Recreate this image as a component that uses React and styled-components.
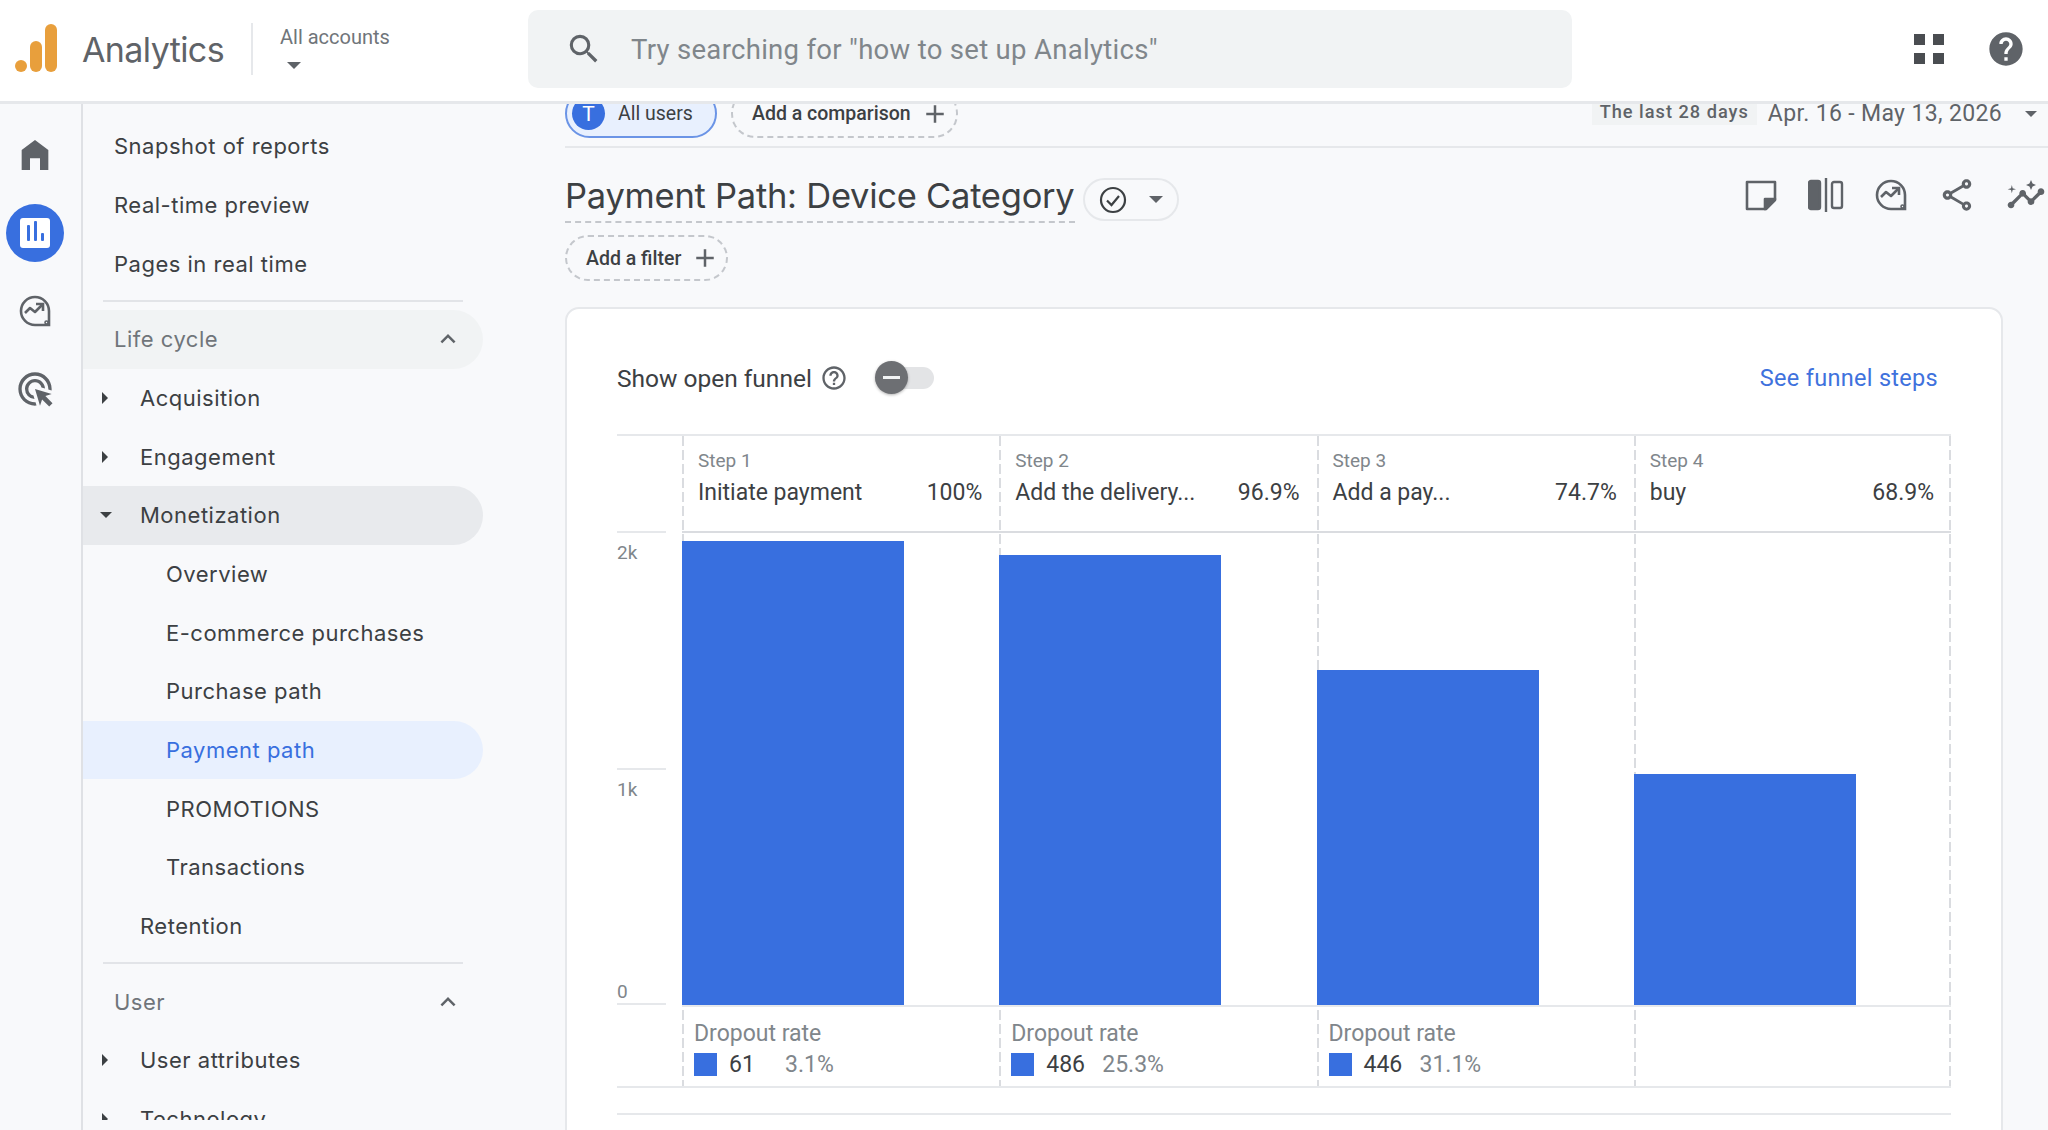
import React from 'react';
import styled, { createGlobalStyle } from 'styled-components';
import { MdSearch, MdHelp, MdAdd, MdExpandLess, MdHelpOutline, MdAdsClick, MdOutlineShare, MdInsights } from 'react-icons/md';

const GlobalStyle = createGlobalStyle`
  html, body {
    margin: 0;
    padding: 0;
    background: #f8f9fb;
  }
  * { box-sizing: border-box; }
`;

const SANS = `"Inter", "Roboto", sans-serif`;
const ROBOTO = `"Roboto", "Liberation Sans", sans-serif`;
const BLUE = '#386fdf';
const DASHES = 'repeating-linear-gradient(to bottom, #dadce0 0 10px, transparent 10px 14px)';

const Page = styled.div`
  width: 2048px;
  height: 1130px;
  overflow: hidden;
  display: flex;
  flex-direction: column;
  background: #f8f9fb;
  font-family: ${ROBOTO};
  color: #3c4043;
`;

const Header = styled.header`
  position: relative;
  z-index: 2;
  flex: none;
  height: 104px;
  padding-bottom: 3px;
  display: flex;
  align-items: center;
  background: #fff;
  border-bottom: 3px solid #e6e8eb;
`;

const LogoMark = styled.svg`
  flex: none;
  width: 42px;
  height: 48px;
  margin-left: 15px;
  margin-top: -2px;
`;

const Brand = styled.span`
  margin-left: 25px;
  width: 143px;
  font-family: ${SANS};
  font-size: 34px;
  letter-spacing: -0.6px;
  color: #5f6368;
`;

const HeaderRule = styled.span`
  width: 2px;
  height: 52px;
  margin-left: 26px;
  background: #e6e8eb;
`;

const AccountPicker = styled.div`
  width: 248px;
  margin-left: 27px;
  margin-top: -4px;
  display: flex;
  flex-direction: column;
  align-items: flex-start;
  gap: 13px;
  font-size: 20px;
  color: #70757a;
`;

const SearchBox = styled.div`
  width: 1044px;
  height: 78px;
  padding-left: 41px;
  display: flex;
  align-items: center;
  gap: 32px;
  background: #f1f3f4;
  border-radius: 10px;
  font-size: 27.5px;
  letter-spacing: 0.3px;
  color: #80868b;
  svg { flex: none; color: #5f6368; margin: 0 -4px; }
`;

const HeaderIcons = styled.div`
  margin-left: auto;
  padding-right: 22px;
  display: flex;
  align-items: center;
  gap: 42px;
  color: #5f6368;
`;

const Caret = styled.span`
  display: block;
  flex: none;
  width: 0;
  height: 0;
  margin-left: ${p => p.$ml || 0}px;
  border-left: 7px solid transparent;
  border-right: 7px solid transparent;
  border-top: 7px solid #5f6368;
`;

const SquareGrid = styled.div`
  width: 30px;
  height: 30px;
  display: grid;
  grid-template-columns: 11px 11px;
  grid-auto-rows: 11px;
  gap: 8px;
  span { background: #4a4d51; }
`;

const Body = styled.div`
  flex: 1;
  min-height: 0;
  display: flex;
`;

const Rail = styled.nav`
  flex: none;
  width: 83px;
  padding-top: 12px;
  border-right: 2px solid #dfe1e5;
  display: flex;
  flex-direction: column;
  align-items: center;
  color: #5f6368;
`;

const RailSlot = styled.div`
  width: 58px;
  height: 78px;
  margin-right: 11px;
  display: flex;
  align-items: center;
  justify-content: center;
`;

const RailActive = styled.div`
  width: 58px;
  height: 58px;
  border-radius: 50%;
  background: ${BLUE};
  display: flex;
  align-items: center;
  justify-content: center;
`;

const ReportTile = styled.div`
  width: 30px;
  height: 30px;
  padding: 7px 5px;
  display: flex;
  align-items: flex-end;
  justify-content: center;
  gap: 4px;
  border-radius: 3px;
  background: #fff;
`;

const ReportBar = styled.span`
  width: 3px;
  height: ${p => p.$h}px;
  background: ${BLUE};
  border-radius: 1px;
`;

const SideNav = styled.aside`
  flex: none;
  width: 400px;
  height: 1016px;
  overflow: hidden;
  padding-top: 13px;
  font-family: ${SANS};
  font-size: 22px;
  letter-spacing: 0.5px;
  color: #3c4043;
`;

const NavRow = styled.div`
  height: 58.67px;
  padding-left: ${p => p.$indent}px;
  padding-right: 20px;
  display: flex;
  align-items: center;
  border-radius: 0 30px 30px 0;
  background: ${p => p.$bg || 'transparent'};
  color: ${p => p.$color || 'inherit'};
`;

const NavRule = styled.div`
  height: 2px;
  margin: 7px 20px 8px 20px;
  background: #e2e4e8;
`;

const Twisty = styled.span`
  flex: none;
  width: 42px;
  margin-left: -42px;
  padding-left: ${p => (p.$open ? 2 : 4)}px;
  &::before {
    content: '';
    display: block;
    width: 0;
    height: 0;
    ${p =>
      p.$open
        ? `border-left: 6px solid transparent; border-right: 6px solid transparent; border-top: 6px solid #3c4043;`
        : `border-top: 6px solid transparent; border-bottom: 6px solid transparent; border-left: 6px solid #3c4043;`}
  }
`;

const GroupChevron = styled(MdExpandLess)`
  margin-left: auto;
  color: #5f6368;
`;

const Main = styled.main`
  flex: 1;
  min-width: 0;
  padding-left: 82px;
`;

const CompareBar = styled.div`
  height: 59px;
  margin-top: -15px;
  display: flex;
  align-items: flex-start;
  border-bottom: 2px solid #e6e8eb;
`;

const UserPill = styled.div`
  width: 152px;
  height: 49px;
  padding-left: 5px;
  display: flex;
  align-items: center;
  gap: 13px;
  border: 2.5px solid #6b94e6;
  border-radius: 25px;
  background: #e8f0fe;
  font-size: 19.5px;
  color: #3c4043;
`;

const UserBadge = styled.span`
  width: 33px;
  height: 33px;
  display: flex;
  align-items: center;
  justify-content: center;
  border-radius: 50%;
  background: ${BLUE};
  font-size: 21px;
  color: #fff;
`;

const AddChip = styled.div`
  width: ${p => p.$w}px;
  height: ${p => p.$h}px;
  margin-left: ${p => p.$ml || 0}px;
  padding-left: 19px;
  display: flex;
  align-items: center;
  gap: 9px;
  border: 2px dashed #c4c7cc;
  border-radius: 24px;
  font-size: 19.5px;
  font-weight: 500;
  color: #3c4043;
  svg { flex: none; color: #5f6368; }
`;

const DateGroup = styled.div`
  margin-left: auto;
  padding-right: 11px;
  padding-top: 11px;
  display: flex;
  align-items: center;
  font-size: 23px;
  letter-spacing: 0.35px;
  color: #5f6368;
`;

const PeriodChip = styled.span`
  width: 165px;
  height: 23px;
  margin-right: 11px;
  padding-bottom: 4px;
  display: flex;
  align-items: center;
  justify-content: center;
  background: #f1f3f4;
  font-size: 18.2px;
  font-weight: 500;
  letter-spacing: 1px;
  color: #5f6368;
`;

const DateCaret = styled(Caret)`
  margin-left: 23px;
  border-left-width: 6px;
  border-right-width: 6px;
  border-top-width: 6px;
`;

const TitleRow = styled.div`
  height: 87px;
  padding-top: 24px;
  display: flex;
  align-items: flex-start;
`;

const Title = styled.h1`
  margin: 0;
  height: 51px;
  font-family: ${SANS};
  font-size: 34.5px;
  font-weight: 400;
  line-height: 48px;
  letter-spacing: -0.25px;
  color: #3c4043;
  border-bottom: 2px dashed #c4c7cc;
`;

const StatusPill = styled.div`
  width: 96px;
  height: 43px;
  margin-left: 8px;
  margin-top: 6px;
  padding-left: 14px;
  display: flex;
  align-items: center;
  gap: 22px;
  border: 2px solid #e6e8eb;
  border-radius: 22px;
`;

const ToolIcons = styled.div`
  margin-left: auto;
  padding-right: 2px;
  padding-top: 3px;
  display: flex;
  align-items: center;
  gap: 30px;
  color: #5f6368;
`;

const Card = styled.section`
  width: 1438px;
  height: 900px;
  margin-top: 26px;
  padding: 52px 50px 0 50px;
  background: #fff;
  border: 2px solid #e6e8eb;
  border-radius: 14px;
`;

const CardTop = styled.div`
  height: 34px;
  display: flex;
  align-items: center;
  font-size: 24.5px;
  color: #3c4043;
`;

const HelpMark = styled(MdHelpOutline)`
  margin-left: 8px;
  color: #5f6368;
`;

const Toggle = styled.div`
  position: relative;
  width: 59px;
  height: 22px;
  margin-left: 27px;
  border-radius: 11px;
  background: #e3e4e6;
`;

const ToggleThumb = styled.span`
  position: absolute;
  left: 0;
  top: -6px;
  width: 33px;
  height: 33px;
  display: flex;
  align-items: center;
  justify-content: center;
  border-radius: 50%;
  background: #6d6f73;
  box-shadow: 0 1px 3px rgba(0, 0, 0, 0.3);
  &::before {
    content: '';
    width: 17px;
    height: 3px;
    background: #f1f3f4;
  }
`;

const FunnelLink = styled.a`
  margin-left: auto;
  margin-right: 13px;
  color: #3f72dd;
  font-size: 23.5px;
  letter-spacing: 0.3px;
`;

const Funnel = styled.div`
  width: 1334px;
  height: 654px;
  margin-top: 39px;
  display: grid;
  grid-template-columns: 65px repeat(4, 1fr);
  border-top: 2px solid #e6e8eb;
  border-bottom: 2px solid #e6e8eb;
`;

const Axis = styled.div`
  padding-top: 95px;
  color: #80868b;
  font-size: 19px;
`;

const AxisBand = styled.div`
  width: 49px;
  height: 237px;
  padding-top: 8px;
  display: flex;
  flex-direction: column;
  justify-content: space-between;
  border-top: 2px solid #e6e8eb;
  border-bottom: ${p => (p.$last ? '2px solid #e6e8eb' : 'none')};
`;

const StepColumn = styled.div`
  display: flex;
  flex-direction: column;
  background-image: ${DASHES}${p => (p.$last ? `, ${DASHES}` : '')};
  background-repeat: no-repeat;
  background-size: 2px 100%;
  background-position: left top${p => (p.$last ? ', right top' : '')};
`;

const StepHead = styled.div`
  flex: none;
  height: 97px;
  padding: 13px 17px 0 16px;
  border-bottom: 2px solid #dadce0;
`;

const StepLabel = styled.div`
  height: 24px;
  font-size: 19px;
  line-height: 24px;
  color: #80868b;
`;

const StepName = styled.div`
  margin-top: 6px;
  display: flex;
  justify-content: space-between;
  font-size: 23px;
  line-height: 28px;
  color: #3c4043;
`;

const Plot = styled.div`
  flex: none;
  height: 474px;
  display: flex;
  align-items: flex-end;
  border-bottom: 2px solid #e6e8eb;
`;

const Bar = styled.div`
  width: 222px;
  height: ${p => p.$h}px;
  background: ${BLUE};
`;

const Dropout = styled.div`
  padding: 13px 0 0 12px;
  font-size: 23px;
  color: #80868b;
`;

const DropoutRow = styled.div`
  margin-top: 4px;
  display: flex;
  align-items: center;
  font-size: 23px;
`;

const Swatch = styled.span`
  width: 23px;
  height: 23px;
  margin-right: 12px;
  background: ${BLUE};
`;

const DropoutCount = styled.span`
  width: 56px;
  color: #3c4043;
`;

const CardRule = styled.div`
  width: 1334px;
  height: 2px;
  margin-top: 25px;
  background: #e6e8eb;
`;

const steps = [
  { label: 'Step 1', name: 'Initiate payment', pct: '100%', bar: 464, count: '61', rate: '3.1%' },
  { label: 'Step 2', name: 'Add the delivery...', pct: '96.9%', bar: 450, count: '486', rate: '25.3%' },
  { label: 'Step 3', name: 'Add a pay...', pct: '74.7%', bar: 335, count: '446', rate: '31.1%' },
  { label: 'Step 4', name: 'buy', pct: '68.9%', bar: 231 },
];

const navTop = ['Snapshot of reports', 'Real-time preview', 'Pages in real time'];
const monetization = ['Overview', 'E-commerce purchases', 'Purchase path'];

function ExploreIcon({ size = 34 }) {
  return (
    <svg width={size} height={size} viewBox="0 0 34 34" fill="none" stroke="currentColor" strokeWidth="2.6">
      <path d="M31 17A14 14 0 1 0 17 31h14z" />
      <path d="M7 19l5-5 5 4 7-7" strokeLinejoin="round" />
      <path d="M18 10h7v7" />
      <circle cx="28.5" cy="28.5" r="1.5" fill="#f8f9fb" strokeWidth="1.6" />
    </svg>
  );
}

function App() {
  return (
    <Page>
      <GlobalStyle />
      <Header>
        <LogoMark viewBox="0 0 42 48">
          <rect x="0" y="36" width="12" height="12" rx="6" fill="#e89f3c" />
          <rect x="15" y="17" width="12" height="31" rx="6" fill="#e89f3c" />
          <rect x="30" y="0" width="12" height="48" rx="6" fill="#e89f3c" />
        </LogoMark>
        <Brand>Analytics</Brand>
        <HeaderRule />
        <AccountPicker>
          All accounts
          <Caret $ml={7} />
        </AccountPicker>
        <SearchBox>
          <MdSearch size={38} />
          Try searching for "how to set up Analytics"
        </SearchBox>
        <HeaderIcons>
          <SquareGrid>
            <span /><span /><span /><span />
          </SquareGrid>
          <MdHelp size={40} />
        </HeaderIcons>
      </Header>
      <Body>
        <Rail>
          <RailSlot>
            <svg width="40" height="40" viewBox="0 0 24 24" fill="currentColor">
              <path d="M12 3L4 9v12h5v-7h6v7h5V9z" />
            </svg>
          </RailSlot>
          <RailSlot>
            <RailActive>
              <ReportTile>
                <ReportBar $h={16} />
                <ReportBar $h={20} />
                <ReportBar $h={8} />
              </ReportTile>
            </RailActive>
          </RailSlot>
          <RailSlot><ExploreIcon /></RailSlot>
          <RailSlot><MdAdsClick size={40} /></RailSlot>
        </Rail>
        <SideNav>
          {navTop.map(t => (
            <NavRow key={t} $indent={31}>{t}</NavRow>
          ))}
          <NavRule />
          <NavRow $indent={31} $bg="#f1f3f4" $color="#70757a">
            Life cycle
            <GroupChevron size={30} />
          </NavRow>
          <NavRow $indent={57}><Twisty />Acquisition</NavRow>
          <NavRow $indent={57}><Twisty />Engagement</NavRow>
          <NavRow $indent={57} $bg="#e8eaed"><Twisty $open />Monetization</NavRow>
          {monetization.map(t => (
            <NavRow key={t} $indent={83}>{t}</NavRow>
          ))}
          <NavRow $indent={83} $bg="#e8f0fe" $color={BLUE}>Payment path</NavRow>
          <NavRow $indent={83}>PROMOTIONS</NavRow>
          <NavRow $indent={83}>Transactions</NavRow>
          <NavRow $indent={57}>Retention</NavRow>
          <NavRule />
          <NavRow $indent={31} $color="#70757a">
            User
            <GroupChevron size={30} />
          </NavRow>
          <NavRow $indent={57}><Twisty />User attributes</NavRow>
          <NavRow $indent={57}><Twisty />Technology</NavRow>
        </SideNav>
        <Main>
          <CompareBar>
            <UserPill>
              <UserBadge>T</UserBadge>
              All users
            </UserPill>
            <AddChip $w={227} $h={49} $ml={14}>
              Add a comparison
              <MdAdd size={30} />
            </AddChip>
            <DateGroup>
              <PeriodChip>The last 28 days</PeriodChip>
              Apr. 16 - May 13, 2026
              <DateCaret />
            </DateGroup>
          </CompareBar>
          <TitleRow>
            <Title>Payment Path: Device Category</Title>
            <StatusPill>
              <svg width="28" height="28" viewBox="0 0 28 28" fill="none" stroke="#3c4043" strokeWidth="2.2">
                <circle cx="14" cy="14" r="12" />
                <path d="M8 14.5l4.5 4.5L20 10" />
              </svg>
              <Caret />
            </StatusPill>
            <ToolIcons>
              <svg width="34" height="34" viewBox="0 0 34 34" fill="none" stroke="currentColor" strokeWidth="2.6">
                <path d="M3 4h28v18l-9 9H3z" strokeLinejoin="round" />
                <path d="M31 21l-10 10V21z" fill="currentColor" strokeLinejoin="round" />
              </svg>
              <svg width="36" height="36" viewBox="0 0 36 36" fill="none" stroke="currentColor" strokeWidth="2.4">
                <rect x="1" y="4" width="11" height="28" rx="2" fill="currentColor" />
                <path d="M18 1v34" />
                <rect x="24" y="5" width="10" height="26" rx="2" />
              </svg>
              <ExploreIcon />
              <MdOutlineShare size={38} />
              <MdInsights size={40} />
            </ToolIcons>
          </TitleRow>
          <AddChip $w={163} $h={46}>
            Add a filter
            <MdAdd size={30} />
          </AddChip>
          <Card>
            <CardTop>
              Show open funnel
              <HelpMark size={28} />
              <Toggle><ToggleThumb /></Toggle>
              <FunnelLink>See funnel steps</FunnelLink>
            </CardTop>
            <Funnel>
              <Axis>
                <AxisBand>2k</AxisBand>
                <AxisBand $last>
                  <span>1k</span>
                  <span>0</span>
                </AxisBand>
              </Axis>
              {steps.map((s, i) => (
                <StepColumn key={s.label} $last={i === steps.length - 1}>
                  <StepHead>
                    <StepLabel>{s.label}</StepLabel>
                    <StepName>
                      <span>{s.name}</span>
                      <span>{s.pct}</span>
                    </StepName>
                  </StepHead>
                  <Plot>
                    <Bar $h={s.bar} />
                  </Plot>
                  {s.count && (
                    <Dropout>
                      Dropout rate
                      <DropoutRow>
                        <Swatch />
                        <DropoutCount>{s.count}</DropoutCount>
                        {s.rate}
                      </DropoutRow>
                    </Dropout>
                  )}
                </StepColumn>
              ))}
            </Funnel>
            <CardRule />
          </Card>
        </Main>
      </Body>
    </Page>
  );
}

export default App;
